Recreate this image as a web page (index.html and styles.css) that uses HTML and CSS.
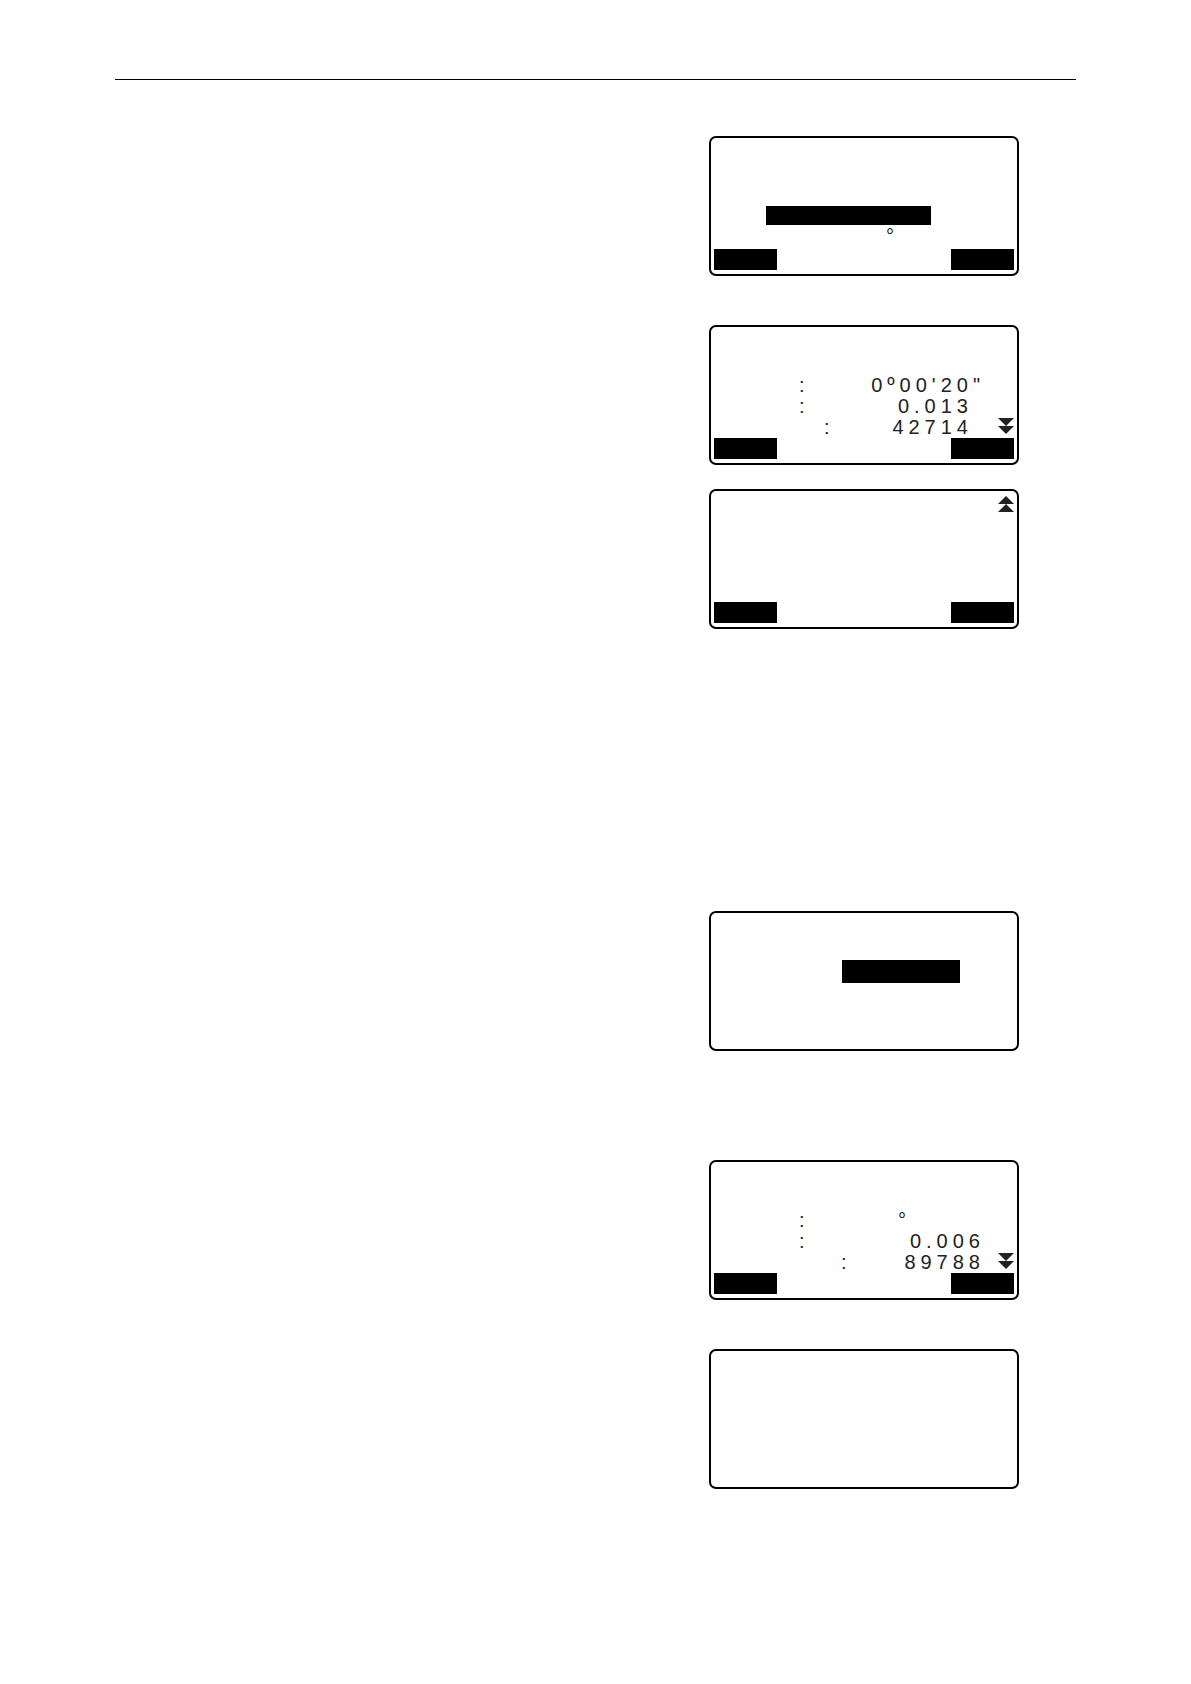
FILE: index.html
```
<!DOCTYPE html>
<html lang="en">
<head>
    <meta charset="UTF-8">
    <meta name="viewport" content="width=device-width, initial-scale=1.0">
    <title>Measurement screens</title>
    <link rel="stylesheet" href="styles.css">
</head>
<body>
    <div class="page">
        <hr class="rule">
        <main class="steps">
            <section class="step">
                <div class="screen">
                    <div class="field field-name"></div>
                    <div class="row row-spaced">
                        <span class="label label-value"></span>
                        <span>°</span>
                    </div>
                    <div class="softkeys">
                        <button class="softkey" type="button" aria-label="Left key"></button>
                        <button class="softkey" type="button" aria-label="Right key"></button>
                    </div>
                </div>
            </section>

            <section class="step">
                <div class="screen">
                    <div class="row">
                        <span class="label"></span>
                        <span class="colon">:</span>
                        <span class="value">0º00'20"</span>
                        <span class="end"></span>
                    </div>
                    <div class="row">
                        <span class="label"></span>
                        <span class="colon">:</span>
                        <span class="value value-unit">0.013</span>
                        <span class="end"></span>
                    </div>
                    <div class="row">
                        <span class="label label-long"></span>
                        <span class="colon">:</span>
                        <span class="value value-unit">42714</span>
                        <span class="end">
                            <svg class="arrow" viewBox="0 0 16 16"><path d="M0 0h16L8 8zM0 8h16L8 16z"/></svg>
                        </span>
                    </div>
                    <div class="softkeys">
                        <button class="softkey" type="button" aria-label="Left key"></button>
                        <button class="softkey" type="button" aria-label="Right key"></button>
                    </div>
                </div>
                <div class="screen">
                    <div class="row row-top">
                        <span class="end">
                            <svg class="arrow" viewBox="0 0 16 16"><path d="M0 8h16L8 0zM0 16h16L8 8z"/></svg>
                        </span>
                    </div>
                    <div class="softkeys">
                        <button class="softkey" type="button" aria-label="Left key"></button>
                        <button class="softkey" type="button" aria-label="Right key"></button>
                    </div>
                </div>
            </section>

            <section class="step step-new">
                <div class="screen">
                    <div class="field field-point"></div>
                </div>
            </section>

            <section class="step step-result">
                <div class="screen">
                    <div class="row">
                        <span class="label"></span>
                        <span class="colon">:</span>
                        <span class="value value-degree">°</span>
                        <span class="end"></span>
                    </div>
                    <div class="row">
                        <span class="label"></span>
                        <span class="colon">:</span>
                        <span class="value">0.006</span>
                        <span class="end"></span>
                    </div>
                    <div class="row">
                        <span class="label label-longer"></span>
                        <span class="colon">:</span>
                        <span class="value">89788</span>
                        <span class="end">
                            <svg class="arrow" viewBox="0 0 16 16"><path d="M0 0h16L8 8zM0 8h16L8 16z"/></svg>
                        </span>
                    </div>
                    <div class="softkeys">
                        <button class="softkey" type="button" aria-label="Left key"></button>
                        <button class="softkey" type="button" aria-label="Right key"></button>
                    </div>
                </div>
            </section>

            <section class="step">
                <div class="screen"></div>
            </section>
        </main>
    </div>
</body>
</html>
```

FILE: styles.css
```
* {
    box-sizing: border-box;
}
body {
    margin: 0;
    background: #fff;
    color: #222;
    font-family: "Liberation Sans", Arial, sans-serif;
    font-size: 20px;
    line-height: 21px;
}
.page {
    padding: 79px 115px;
}
.rule {
    height: 1px;
    margin: 0 0 56px;
    border: 0;
    background: #000;
}
.steps {
    display: flex;
    flex-direction: column;
    padding-right: 57px;
}
.step {
    display: flex;
    flex-direction: column;
    align-items: flex-end;
    gap: 24px;
    margin-bottom: 49px;
}
.step-new {
    margin-top: 233px;
}
.step-result {
    margin-top: 60px;
}

/* instrument display */
.screen {
    display: flex;
    flex-direction: column;
    justify-content: flex-end;
    width: 310px;
    min-height: 140px;
    padding: 3px 3px 4px;
    border: 2px solid #000;
    border-radius: 7px;
    letter-spacing: 5px;
}
.row {
    display: flex;
    height: 21px;
}
.row-spaced {
    margin: 1px 0 2px;
}
.row-top {
    justify-content: flex-end;
    margin: 1px 0 auto;
}
.label {
    width: 85px;
}
.label-long {
    width: 110px;
}
.label-longer {
    width: 127px;
}
.label-value {
    width: 172px;
}
.colon {
    width: 11px;
}
.value {
    flex: 1;
    text-align: right;
}
.value-unit {
    padding-right: 12px;
}
.value-degree {
    padding-left: 88px;
    text-align: left;
}
.end {
    display: flex;
    justify-content: flex-end;
    width: 29px;
    padding-top: 1px;
}
.arrow {
    width: 16px;
    height: 16px;
    fill: #222;
}
.field {
    background: #000;
}
.field-name {
    width: 165px;
    height: 19px;
    margin-left: 52px;
}
.field-point {
    width: 118px;
    height: 23px;
    margin: 44px 0 auto 128px;
}
.softkeys {
    display: flex;
    justify-content: space-between;
}
.softkey {
    width: 63px;
    height: 21px;
    padding: 0;
    border: 0;
    background: #000;
}
```
